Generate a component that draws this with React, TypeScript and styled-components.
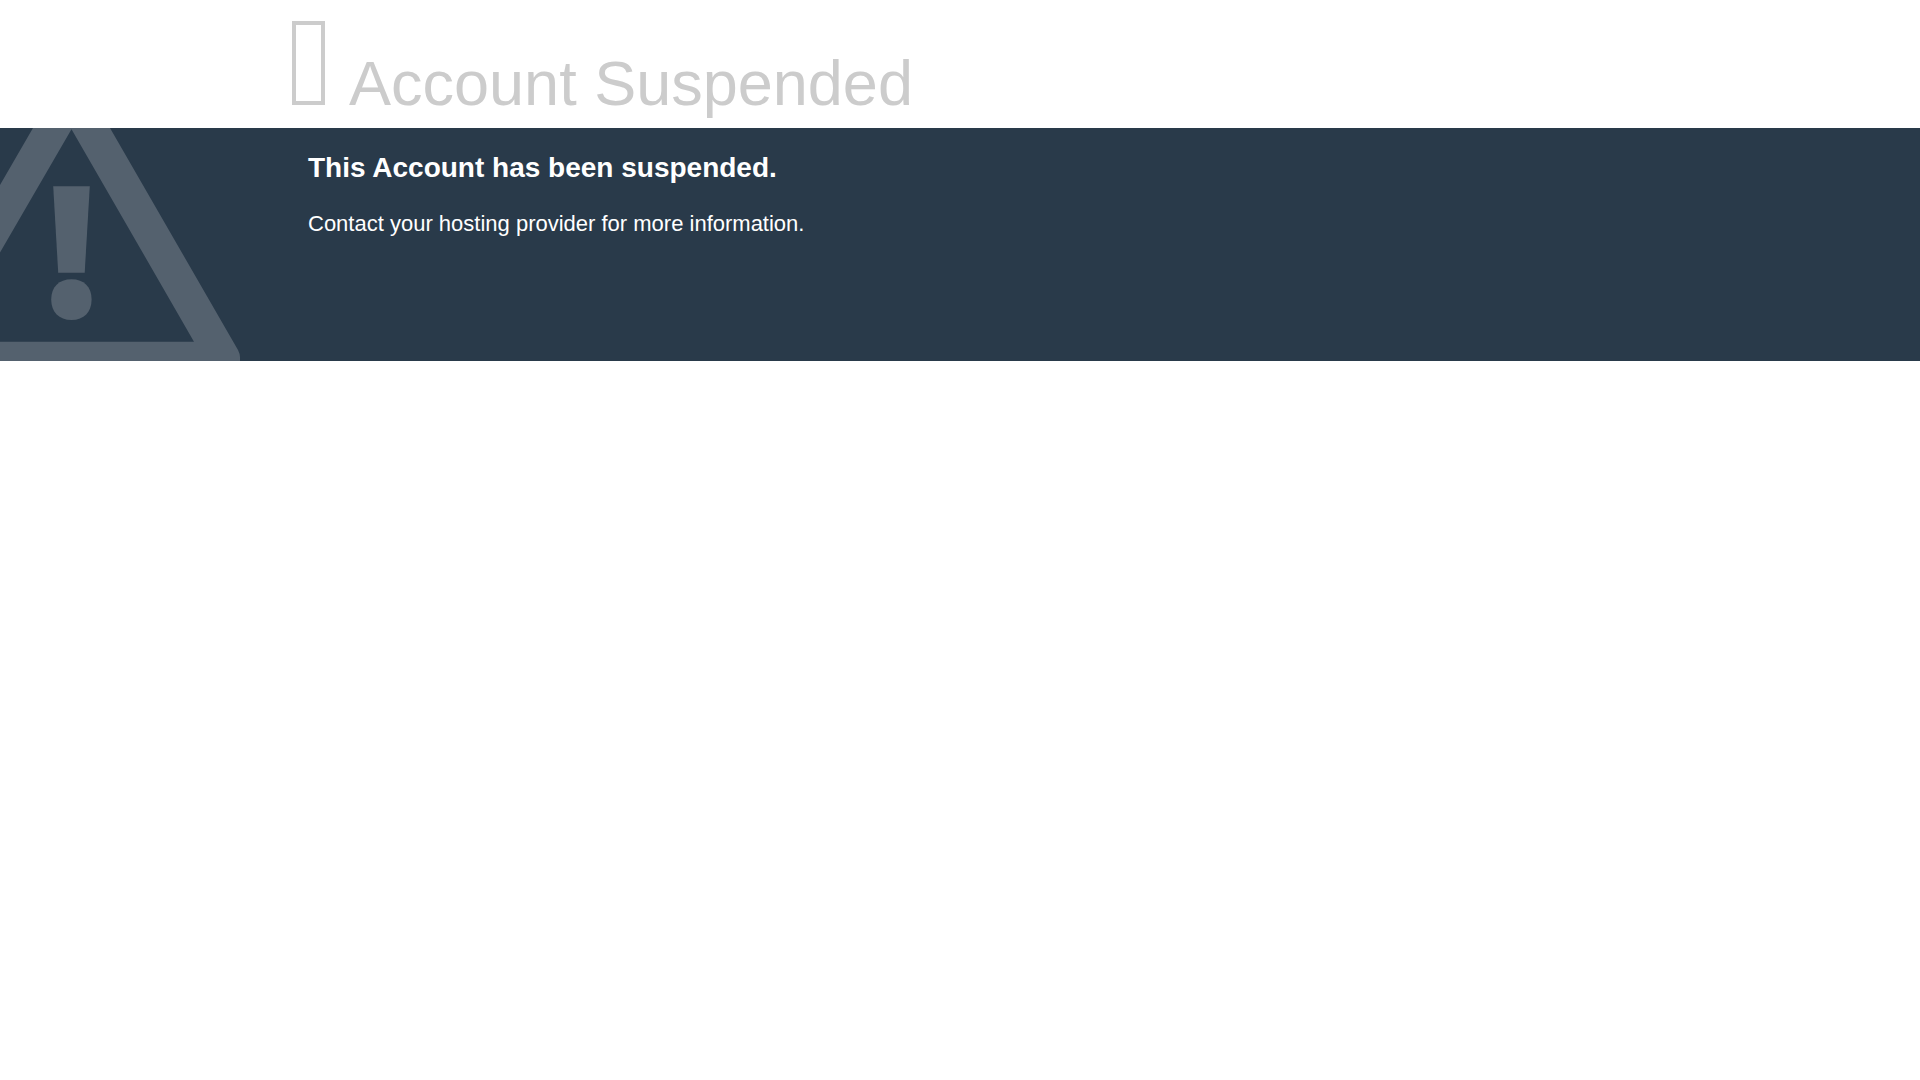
import React from "react";
import styled, { createGlobalStyle } from "styled-components";

const GlobalStyle = createGlobalStyle`
  body {
    margin: 0;
    background: #ffffff;
    font-family: "Liberation Sans", Arial, sans-serif;
  }
`;

const Header = styled.header`
  display: flex;
  align-items: baseline;
  gap: 24px;
  padding: 21px 15% 9px;
  color: #cccccc;
`;

const StatusGlyph = styled.span`
  box-sizing: border-box;
  flex: none;
  width: 33px;
  height: 84px;
  margin-left: 4px;
  border: 4px solid currentColor;
`;

const Title = styled.h1`
  margin: 0;
  font-size: 63px;
  line-height: 72px;
  font-weight: 400;
`;

const Band = styled.main`
  display: grid;
  grid-template-columns: 15% 1fr;
  background: #293a4a;
  color: #ffffff;
`;

const WarningArt = styled.svg`
  display: block;
  width: 240px;
  height: 233px;
  fill: #54616e;
`;

const Message = styled.section`
  display: flex;
  flex-direction: column;
  gap: 27px;
  padding: 24px 20px;
`;

const Headline = styled.h2`
  margin: 0;
  font-size: 28px;
  line-height: 32px;
  font-weight: 700;
`;

const Detail = styled.p`
  margin: 0;
  font-size: 22px;
  line-height: 26px;
`;

export default function App() {
  return (
    <>
      <GlobalStyle />
      <Header>
        <StatusGlyph aria-hidden="true" />
        <Title>Account Suspended</Title>
      </Header>
      <Band>
        <WarningArt viewBox="0 0 240 233" aria-hidden="true">
          <path
            fillRule="evenodd"
            d="M33 0H110L238 222Q240 226 240 229V233H0V213.700H194L71.500 1.200L0 124.500V57Z"
          />
          <path d="M53.200 58.300H89.800L84.700 144.700H58.200Z" />
          <path d="M71.500 151.300C84 151.300 91.600 159 91.600 171.500S84 192 71.500 192S51.200 184 51.200 171.500S59 151.300 71.500 151.300Z" />
        </WarningArt>
        <Message>
          <Headline>This Account has been suspended.</Headline>
          <Detail>Contact your hosting provider for more information.</Detail>
        </Message>
      </Band>
    </>
  );
}
